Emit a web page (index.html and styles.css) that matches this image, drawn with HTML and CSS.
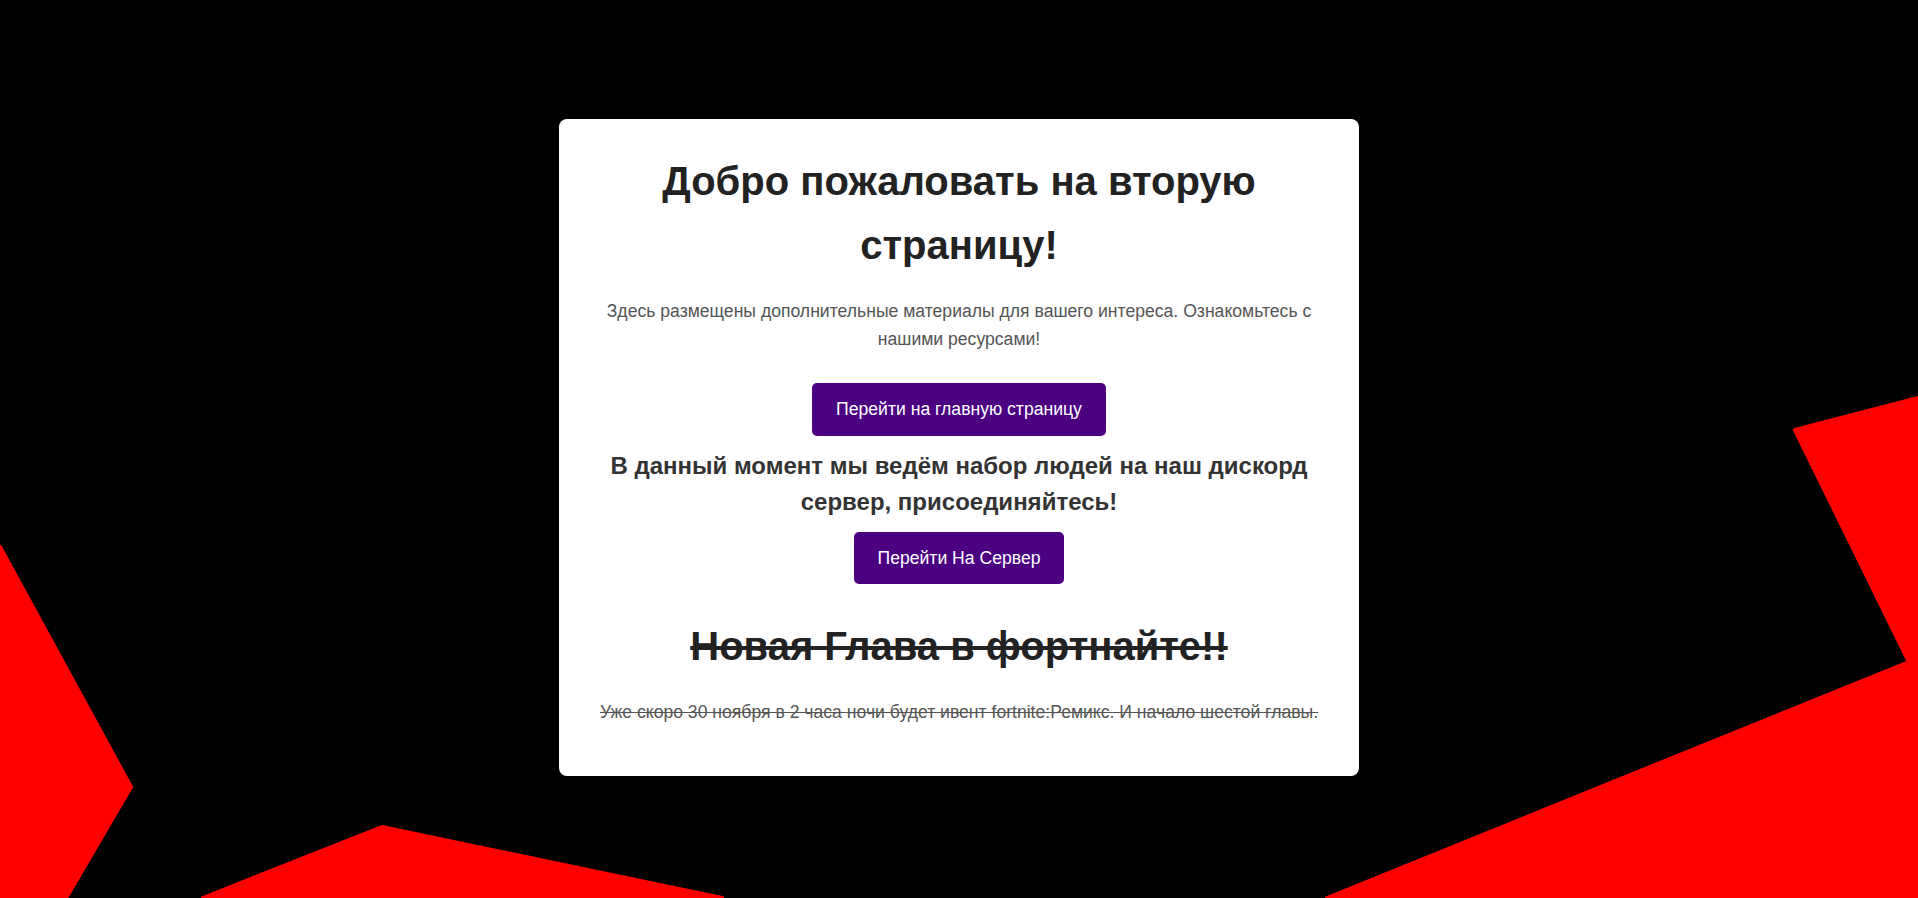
FILE: index.html
```html
<!DOCTYPE html>
<html lang="ru">
<head>
<meta charset="utf-8">
<title>Вторая страница</title>
<link rel="stylesheet" href="styles.css">
</head>
<body>
<svg class="backdrop" viewBox="0 0 1918 898" preserveAspectRatio="none" aria-hidden="true">
  <polygon class="shard" points="0,547 131,787 66,898 0,898"/>
  <polygon class="shard" points="203,898 382,827 722,898"/>
  <polygon class="shard" points="1795,430 1918,398 1918,898 1327,898 1909,662"/>
</svg>
<main class="card">
  <h1 class="title">Добро пожаловать на вторую страницу!</h1>
  <p class="text">Здесь размещены дополнительные материалы для вашего интереса. Ознакомьтесь с нашими ресурсами!</p>
  <a class="button button-main" href="#">Перейти на главную страницу</a>
  <h2 class="subtitle">В данный момент мы ведём набор людей на наш дискорд сервер, присоединяйтесь!</h2>
  <a class="button" href="#">Перейти На Сервер</a>
  <h2 class="title news">Новая Глава в фортнайте!!</h2>
  <p class="text news">Уже скоро 30 ноября в 2 часа ночи будет ивент fortnite:Ремикс. И начало шестой главы.</p>
</main>
</body>
</html>
```
FILE: styles.css
```css
html, body {
  margin: 0;
  padding: 0;
  height: 100%;
}

body {
  background: #000;
  font-family: "Liberation Sans", Arial, sans-serif;
  line-height: 1.6;
  display: flex;
  flex-direction: column;
  align-items: center;
  justify-content: center;
  min-height: 100vh;
  overflow: hidden;
  position: relative;
}

.backdrop {
  position: absolute;
  inset: 0;
  width: 100%;
  height: 100%;
  z-index: 0;
}

.shard {
  fill: #ff0000;
  stroke: #ff0000;
  stroke-width: 4;
  stroke-linejoin: round;
}

.card {
  position: relative;
  z-index: 1;
  box-sizing: border-box;
  width: 800px;
  padding: 30px 40px;
  background: #fff;
  border-radius: 8px;
  text-align: center;
  display: flex;
  flex-direction: column;
  align-items: center;
  margin-top: -3px;
}

.title {
  margin: 0;
  font-size: 40px;
  line-height: 64px;
  font-weight: bold;
  color: #222;
}

.text {
  margin: 20px 0;
  font-size: 17.6px;
  line-height: 1.6;
  color: #555;
}

.button {
  display: inline-block;
  padding: 12px 24px;
  background: #4b0082;
  color: #fff;
  text-decoration: none;
  font-size: 17.6px;
  line-height: 1.6;
  border-radius: 5px;
}

.button-main {
  margin-top: 10px;
}

.subtitle {
  margin: 12px 0;
  font-size: 24px;
  line-height: 1.5;
  font-weight: bold;
  color: #333;
}

.news {
  text-decoration: line-through;
}

.title.news {
  margin-top: 30px;
}

.text.news {
  margin: 20px 0;
}
```
